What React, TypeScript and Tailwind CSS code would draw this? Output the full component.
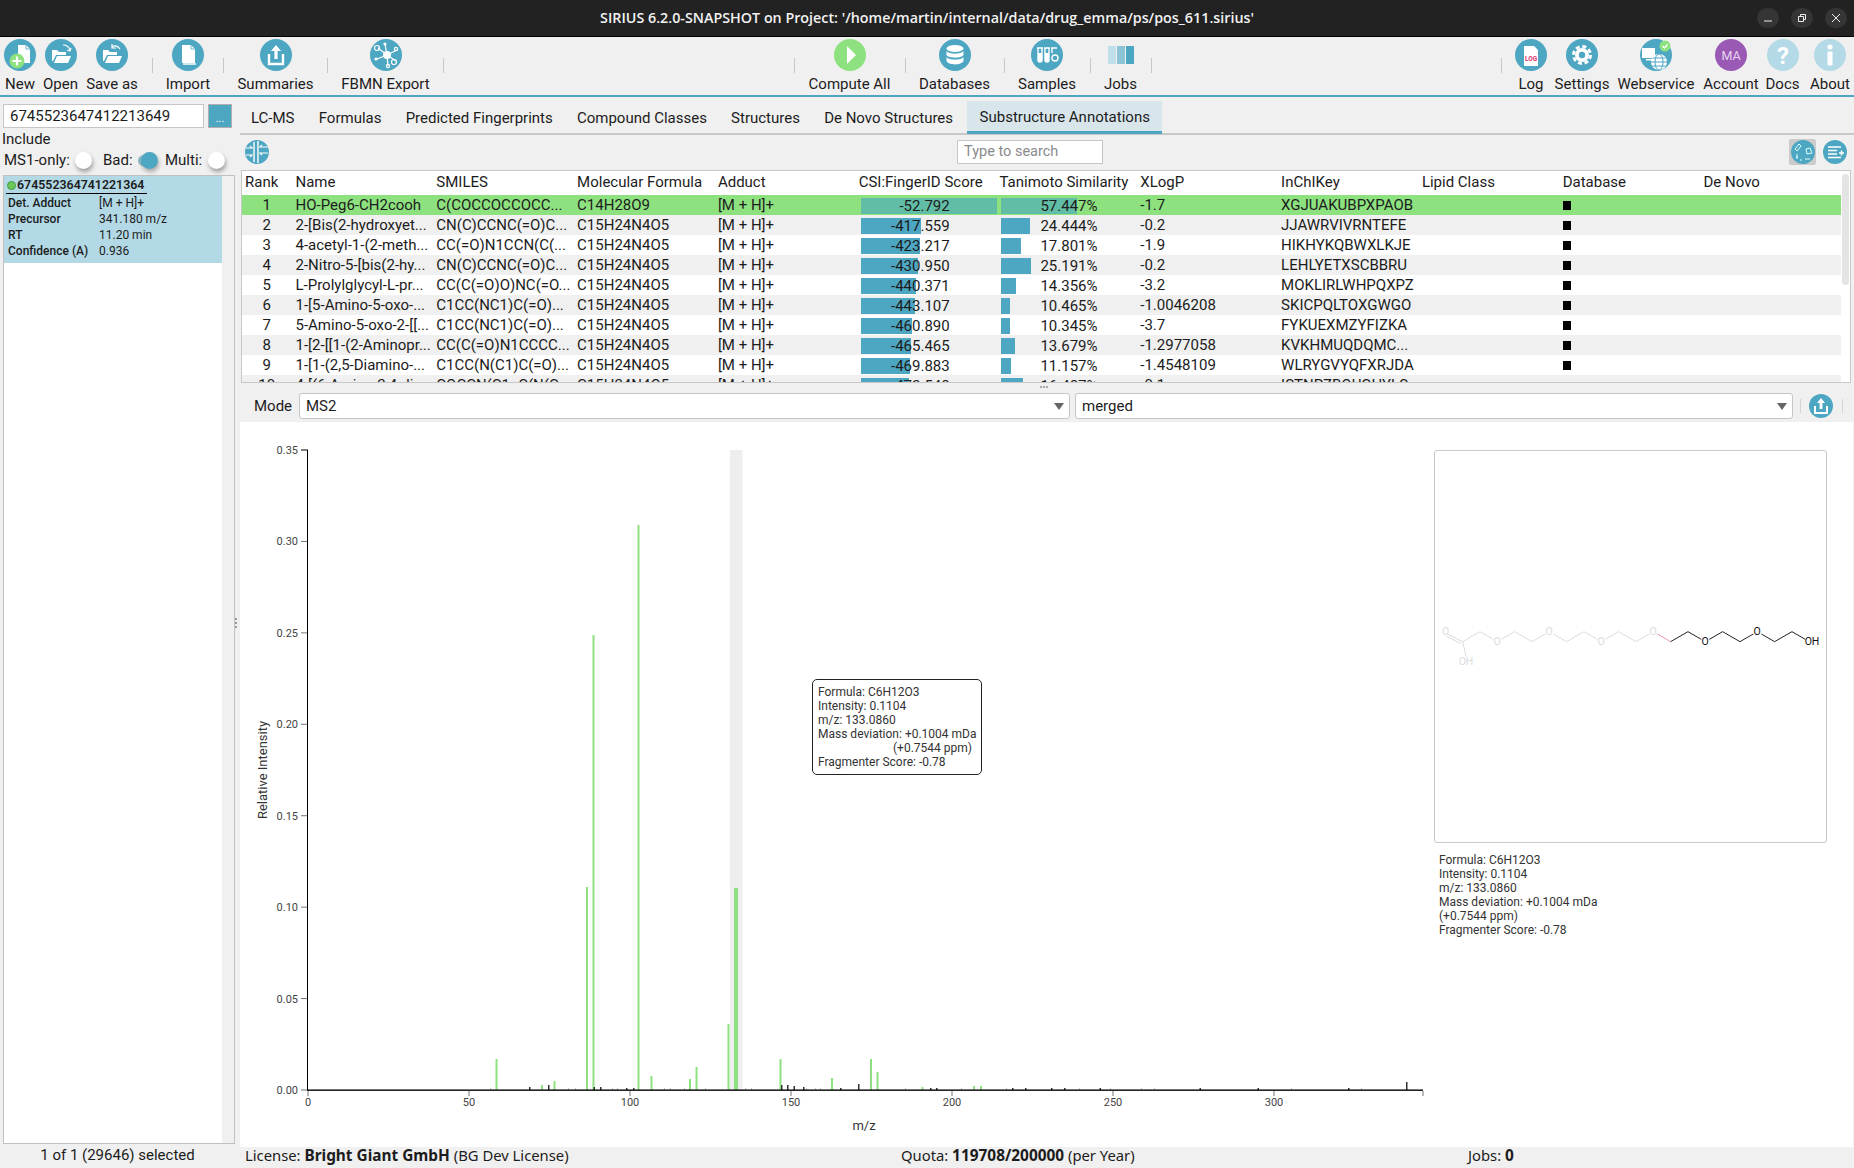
import React from 'react';

const TEAL = '#4da6c2';
const PALE = '#b3dae6';

const Disc = ({ fill = TEAL, children }: { fill?: string; children?: React.ReactNode }) => (
  <svg width="32" height="32" viewBox="0 0 32 32">
    <circle cx="16" cy="16" r="16" fill={fill} />
    {children}
  </svg>
);

const Folder = ({ flip = false }: { flip?: boolean }) => (
  <g>
    <path d="M7 22V11h5l2 2h7v3H11l-3 6z" fill="#fff" />
    <path d="M9 24l3-7h14l-3 7z" fill="#fff" />
    <path d={flip ? 'M16 8c3-2 6-1 8 2' : 'M18 6c3 0 6 2 7 5'} fill="none" stroke="#fff" strokeWidth="1.2" />
    <path d={flip ? 'M16 5v4h4' : 'M22 11l3 1 1-3'} fill="none" stroke="#fff" strokeWidth="1.2" />
  </g>
);

const icons: Record<string, React.ReactNode> = {
  new: (
    <Disc>
      <path d="M14 6h8l4 4v14H14z" fill="#fff" />
      <path d="M22 6v4h4" fill="none" stroke={TEAL} strokeWidth="0.8" />
      <circle cx="13" cy="22" r="7.5" fill="#8de27f" />
      <path d="M13 17.5v9M8.5 22h9" stroke="#fff" strokeWidth="2.2" />
    </Disc>
  ),
  open: <Disc><Folder /></Disc>,
  save: <Disc><Folder flip /></Disc>,
  import: (
    <Disc>
      <path d="M11 9h2v15h11v2H11z" fill="#cfe7ef" />
      <path d="M10 6h9l4 4v14H10z" fill="#fff" />
      <path d="M19 6v4h4" fill="none" stroke={TEAL} strokeWidth="0.8" />
    </Disc>
  ),
  summaries: (
    <Disc>
      <path d="M9 15v10h14V15" fill="none" stroke="#fff" strokeWidth="2.4" />
      <path d="M16 6l-5 6h3.4v8h3.2v-8H21z" fill="#fff" />
    </Disc>
  ),
  fbmn: (
    <Disc>
      <g stroke="#fff" strokeWidth="1.2" fill="none">
        <path d="M17 16L8 9M17 16l-2-11M17 16l10-5M17 16l9 6M17 16l1 11M17 16L7 20" />
        <circle cx="7" cy="9" r="2.5" />
        <circle cx="24" cy="23" r="2.5" />
        <circle cx="18" cy="27" r="1.6" />
        <circle cx="26" cy="10" r="1.6" />
      </g>
      <circle cx="17" cy="16" r="4" fill="#fff" />
      <circle cx="15" cy="5" r="1.6" fill="#fff" />
      <circle cx="6" cy="20" r="1.6" fill="#fff" />
    </Disc>
  ),
  compute: (
    <Disc fill="#8de27f">
      <path d="M13 7l9 9-9 9z" fill="#fff" />
    </Disc>
  ),
  databases: (
    <Disc>
      <ellipse cx="16" cy="9.5" rx="8.5" ry="3.5" fill="#fff" />
      <path d="M7.5 12c2 3.5 15 3.5 17 0v4c-2 3.5-15 3.5-17 0z" fill="#fff" />
      <path d="M7.5 18c2 3.5 15 3.5 17 0v4c-2 4.5-15 4.5-17 0z" fill="#fff" />
    </Disc>
  ),
  samples: (
    <Disc>
      <g fill="none" stroke="#fff" strokeWidth="1.4">
        <path d="M6 9h6M7 9v12a2 2 0 004 0V9" />
        <path d="M13 9h6M14 9v12a2 2 0 004 0V9" />
        <path d="M20 9h6M21 9v5" />
        <circle cx="24" cy="19" r="3" />
      </g>
      <path d="M7 14h4v7a2 2 0 01-4 0zM14 14h4v7a2 2 0 01-4 0z" fill="#fff" />
    </Disc>
  ),
  jobs: (
    <svg width="32" height="32" viewBox="0 0 32 32">
      <rect x="3" y="7" width="8" height="18" fill="#bfe0eb" />
      <rect x="12" y="7" width="8" height="18" fill="#8cc4d6" />
      <rect x="21" y="7" width="8" height="18" fill={TEAL} />
    </svg>
  ),
  log: (
    <Disc>
      <path d="M9 7h10l4 4v16H9z" fill="#fff" />
      <text x="16" y="22" textAnchor="middle" fontSize="6.5" fontWeight="700" fill="#e0306e" fontFamily="Roboto, sans-serif">LOG</text>
    </Disc>
  ),
  settings: (
    <Disc>
      <circle cx="16" cy="16" r="7" fill="#fff" />
      <circle cx="16" cy="16" r="8.5" fill="none" stroke="#fff" strokeWidth="3" strokeDasharray="4 2.68" />
      <circle cx="16" cy="16" r="3.2" fill={TEAL} />
    </Disc>
  ),
  web: (
    <Disc>
      <rect x="2" y="9" width="13" height="10" fill="#fff" />
      <rect x="6" y="20" width="6" height="1.5" fill="#fff" />
      <circle cx="19" cy="23" r="8" fill="#fff" />
      <g fill="none" stroke={TEAL} strokeWidth="1">
        <ellipse cx="19" cy="23" rx="4" ry="8" />
        <path d="M11 23h16M12.5 19h13M12.5 27h13" />
      </g>
      <circle cx="25" cy="7" r="5.5" fill="#8de27f" />
      <path d="M22.5 7l2 2 3-3.5" fill="none" stroke="#fff" strokeWidth="1.4" />
    </Disc>
  ),
  account: (
    <Disc fill="#9b59b6">
      <text x="16" y="20.5" textAnchor="middle" fontSize="12.5" fill="#e6d5ee" fontFamily="Roboto, sans-serif">MA</text>
    </Disc>
  ),
  docs: (
    <Disc fill={PALE}>
      <text x="16" y="25" textAnchor="middle" fontSize="24" fontWeight="700" fill="#fff" fontFamily="Roboto, sans-serif">?</text>
    </Disc>
  ),
  about: (
    <Disc fill={PALE}>
      <circle cx="16" cy="8" r="2.6" fill="#fff" />
      <rect x="13.5" y="12.5" width="5" height="14" rx="1" fill="#fff" />
    </Disc>
  ),
};

const ToolBtn = ({ icon, label, width }: { icon: string; label: string; width: string }) => (
  <div className={`${width} flex flex-col items-center shrink-0 pt-[2px]`}>
    {icons[icon]}
    <span className="mt-[4px] text-[15px] leading-[18px] whitespace-nowrap text-[#1c1c1c]">{label}</span>
  </div>
);

const Sep = () => <div className="w-px h-[15px] mt-[21px] bg-[#c8c8c8] shrink-0" />;

const Knob = () => <div className="w-[17px] h-[17px] rounded-full bg-white shadow-[1px_3px_4px_rgba(0,0,0,0.35)]" />;

const columns = ['Rank', 'Name', 'SMILES', 'Molecular Formula', 'Adduct', 'CSI:FingerID Score', 'Tanimoto Similarity', 'XLogP', 'InChIKey', 'Lipid Class', 'Database', 'De Novo'];

const rows = [
  ['HO-Peg6-CH2cooh', 'C(COCCOCCOCC...', 'C14H28O9', '-52.792', 136, '57.447%', 76, '-1.7', 'XGJUAKUBPXPAOB'],
  ['2-[Bis(2-hydroxyet...', 'CN(C)CCNC(=O)C...', 'C15H24N4O5', '-417.559', 60, '24.444%', 29, '-0.2', 'JJAWRVIVRNTEFE'],
  ['4-acetyl-1-(2-meth...', 'CC(=O)N1CCN(C(...', 'C15H24N4O5', '-423.217', 59, '17.801%', 20, '-1.9', 'HIKHYKQBWXLKJE'],
  ['2-Nitro-5-[bis(2-hy...', 'CN(C)CCNC(=O)C...', 'C15H24N4O5', '-430.950', 57, '25.191%', 30, '-0.2', 'LEHLYETXSCBBRU'],
  ['L-Prolylglycyl-L-pr...', 'CC(C(=O)O)NC(=O...', 'C15H24N4O5', '-440.371', 55, '14.356%', 15, '-3.2', 'MOKLIRLWHPQXPZ'],
  ['1-[5-Amino-5-oxo-...', 'C1CC(NC1)C(=O)...', 'C15H24N4O5', '-443.107', 54, '10.465%', 9, '-1.0046208', 'SKICPQLTOXGWGO'],
  ['5-Amino-5-oxo-2-[[...', 'C1CC(NC1)C(=O)...', 'C15H24N4O5', '-460.890', 51, '10.345%', 9, '-3.7', 'FYKUEXMZYFIZKA'],
  ['1-[2-[[1-(2-Aminopr...', 'CC(C(=O)N1CCCC...', 'C15H24N4O5', '-465.465', 50, '13.679%', 14, '-1.2977058', 'KVKHMUQDQMC...'],
  ['1-[1-(2,5-Diamino-...', 'C1CC(N(C1)C(=O)...', 'C15H24N4O5', '-469.883', 49, '11.157%', 10, '-1.4548109', 'WLRYGVYQFXRJDA'],
  ['4-[(6-Amino-2,4-di...', 'COCCN(C1=C(N(C...', 'C15H24N4O5', '-472.548', 48, '16.487%', 22, '-0.1', 'ISTNPZBOUGHYLS'],
] as const;

const green: [number, number, number?][] = [
  [496.5, 31], [542, 5], [554.5, 9], [587, 203], [593.5, 455], [638.5, 565], [651.5, 14], [690, 11], [696.5, 23],
  [728.5, 66], [736, 202, 4], [780.5, 31], [832, 12], [871, 31], [877.5, 18], [922.5, 3], [974, 4], [981, 4],
];
const black: [number, number][] = [
  [529, 3], [548, 5], [593.5, 3], [600, 3], [626, 2], [633, 2], [781, 5], [787, 5], [793.5, 4], [803, 3], [840, 2], [858, 6],
  [930, 2], [936, 2], [1012, 2], [1025, 2], [1051, 2], [1064, 2], [1099.5, 2], [1199.5, 2], [1257.5, 2], [1348, 2], [1406, 8],
];
const faint: [number, number][] = [
  [490, 2], [568, 2], [575, 2], [612, 2], [617, 2], [664, 2], [670, 2], [684, 2], [705, 2], [745, 2], [751, 2], [806, 2], [815, 2],
  [820, 2], [905, 2], [961, 2], [1006, 2], [1079, 2], [1110, 2], [1141, 2], [1154, 2], [1291, 2], [1361, 2],
];

const SpectrumChart = () => (
  <svg width="1190" height="725" viewBox="240 422 1190 725" className="shrink-0" fontFamily="Roboto, sans-serif">
    <rect x="730" y="450" width="12.5" height="640" fill="#eeeeee" />
    {faint.map(([x, h]) => <rect key={x} x={x} y={1090 - h} width="1" height={h} fill="#c4c4c4" />)}
    {green.map(([x, h, w]) => <rect key={x} x={x - (w ?? 2) / 2} y={1090 - h} width={w ?? 2} height={h} fill="#8de27f" />)}
    {black.map(([x, h]) => <rect key={x} x={x} y={1090 - h} width="1.5" height={h} fill="#333" />)}
    <path d="M307.5 450V1090M301 450h7M307 1090H1423" stroke="#000" strokeWidth="1" fill="none" />
    <path d="M307 1090.4H1423" stroke="#000" strokeWidth="0.8" fill="none" />
    {['0.35', '0.30', '0.25', '0.20', '0.15', '0.10', '0.05', '0.00'].map((t, i) => (
      <g key={t}>
        {i > 0 && <rect x="301" y={450 + i * 91.43 - 0.5} width="6" height="1" fill="#777" />}
        <text x="298" y={454 + i * 91.43} textAnchor="end" fontSize="11" fill="#444">{t}</text>
      </g>
    ))}
    {[0, 50, 100, 150, 200, 250, 300].map((t) => (
      <g key={t}>
        <rect x={307.5 + t * 3.22} y="1091" width="1" height="5" fill="#777" />
        <text x={308 + t * 3.22} y="1106" textAnchor="middle" fontSize="11" fill="#444">{t}</text>
      </g>
    ))}
    <rect x="1422.5" y="1091" width="1" height="5" fill="#777" />
    <text x="864" y="1130" textAnchor="middle" fontSize="13" fill="#333">m/z</text>
    <text transform="translate(267 770) rotate(-90)" textAnchor="middle" fontSize="13" fill="#333">Relative Intensity</text>
  </svg>
);

const light = '#dcdcdc';
const Molecule = () => (
  <svg width="391" height="391" viewBox="1435 451 391 391" fontFamily="Roboto, sans-serif" fontSize="10.5" className="block">
    <g transform="translate(1420 600) scale(0.3333)">
      <path d="M84 103L128 125M78 108L122 130M128 125L138 170M128 125L180 95L220 118M244 118L284 95L336 125L376 102M400 102L440 125L492 95L532 118M556 118L596 95L648 125L688 102" fill="none" stroke={light} strokeWidth="3" />
      <path d="M712 102L752 125" fill="none" stroke="#e89aa6" strokeWidth="3" />
      <path d="M752 125L804 95L844 118M868 118L908 95L960 125L1000 102M1024 102L1064 125L1116 95L1156 118" fill="none" stroke="#222" strokeWidth="3" />
    </g>
    {[[1445.5, 635], [1497, 645], [1549, 635], [1601, 645], [1653, 635]].map(([x, y]) => (
      <text key={x} x={x} y={y} textAnchor="middle" fill={light}>O</text>
    ))}
    <text x="1466" y="665" textAnchor="middle" fill={light}>OH</text>
    <text x="1705" y="645" textAnchor="middle" fill="#111">O</text>
    <text x="1757" y="635" textAnchor="middle" fill="#111">O</text>
    <text x="1812" y="645" textAnchor="middle" fill="#111">OH</text>
  </svg>
);

const Formula = ({ indent = false }: { indent?: boolean }) => (
  <>
    <div>Formula: C6H12O3</div>
    <div>Intensity: 0.1104</div>
    <div>m/z: 133.0860</div>
    <div>Mass deviation: +0.1004 mDa</div>
    <div className={indent ? 'pl-[75px]' : ''}>(+0.7544 ppm)</div>
    <div>Fragmenter Score: -0.78</div>
  </>
);

const Caret = () => (
  <svg width="10" height="7" viewBox="0 0 10 7" className="shrink-0"><path d="M0 0h10L5 7z" fill="#666" /></svg>
);

const Combo = ({ label, width }: { label: string; width: string }) => (
  <div className={`${width} h-[26px] shrink-0 flex items-center justify-between pl-[6px] pr-[5px] bg-white border border-[#c6c6c6] rounded-[3px] text-[15px]`}>
    {label}
    <Caret />
  </div>
);

export default function App() {
  return (
    <div className="w-[1854px] h-[1168px] flex flex-col overflow-hidden bg-[#f0f0f0] text-[#1c1c1c] font-[Roboto,sans-serif]">
      {/* window title */}
      <div className="h-[37px] shrink-0 relative flex items-center justify-center bg-[#222222] border-b border-black">
        <span className="text-[14.3px] font-semibold text-[#f2f2f2] font-['Open_Sans',sans-serif]">
          SIRIUS 6.2.0-SNAPSHOT on Project: '/home/martin/internal/data/drug_emma/ps/pos_611.sirius'
        </span>
        <div className="absolute right-[7px] top-[8px] flex gap-[12px]">
          {['min', 'max', 'close'].map((b) => (
            <div key={b} className="w-[22px] h-[20px] rounded-full bg-[#353535] flex items-center justify-center">
              <svg width="10" height="10" viewBox="0 0 10 10" fill="none" stroke="#eee" strokeWidth="1">
                {b === 'min' && <path d="M1 8h8" />}
                {b === 'max' && <path d="M1.5 3.5h5v5h-5zM3.5 3.5v-2h5v5h-2" />}
                {b === 'close' && <path d="M1 1l8 8M9 1l-8 8" />}
              </svg>
            </div>
          ))}
        </div>
      </div>

      {/* toolbar */}
      <div className="h-[60px] shrink-0 flex pr-[5px] border-b-2 border-[#4da6c2]">
        <ToolBtn icon="new" label="New" width="w-[40px]" />
        <ToolBtn icon="open" label="Open" width="w-[41px]" />
        <ToolBtn icon="save" label="Save as" width="w-[62px]" />
        <div className="w-[9px]" />
        <Sep />
        <ToolBtn icon="import" label="Import" width="w-[70px]" />
        <Sep />
        <ToolBtn icon="summaries" label="Summaries" width="w-[103px]" />
        <Sep />
        <ToolBtn icon="fbmn" label="FBMN Export" width="w-[115px]" />
        <Sep />
        <div className="flex-1" />
        <Sep />
        <ToolBtn icon="compute" label="Compute All" width="w-[110px]" />
        <Sep />
        <ToolBtn icon="databases" label="Databases" width="w-[98px]" />
        <Sep />
        <ToolBtn icon="samples" label="Samples" width="w-[85px]" />
        <Sep />
        <ToolBtn icon="jobs" label="Jobs" width="w-[60px]" />
        <Sep />
        <div className="flex-1" />
        <Sep />
        <ToolBtn icon="log" label="Log" width="w-[58px]" />
        <ToolBtn icon="settings" label="Settings" width="w-[44px]" />
        <ToolBtn icon="web" label="Webservice" width="w-[104px]" />
        <ToolBtn icon="account" label="Account" width="w-[46px]" />
        <ToolBtn icon="docs" label="Docs" width="w-[57px]" />
        <ToolBtn icon="about" label="About" width="w-[38px]" />
      </div>

      <div className="flex-1 flex min-h-0">
        {/* left column */}
        <div className="w-[232px] ml-[3px] shrink-0 flex flex-col pt-[7px]">
          <div className="flex h-[24px] shrink-0">
            <div className="w-[201px] flex items-center bg-white border border-[#c6c6c6] pl-[6px] text-[15px]">6745523647412213649</div>
            <div className="w-[24px] ml-[4px] bg-[#4da6c2] border border-[#b0b0b0] flex items-end justify-center text-[11px] leading-[16px] text-white">...</div>
          </div>
          <div className="ml-[-1px] mt-[2px] text-[15px] leading-[18px]">Include</div>
          <div className="flex items-center h-[24px] text-[15px]">
            <div className="w-[71px] ml-[1px]">MS1-only:</div>
            <Knob />
            <div className="w-[35px] ml-[11px]">Bad:</div>
            <div className="relative w-[20px] h-[17px]">
              <div className="absolute left-0 top-[3px] w-[18px] h-[11px] rounded-full bg-[#8fb9c9]" />
              <div className="absolute left-[3px] top-0 w-[17px] h-[17px] rounded-full bg-[#4da6c2] shadow-[1px_3px_4px_rgba(0,0,0,0.3)]" />
            </div>
            <div className="w-[43px] ml-[7px]">Multi:</div>
            <Knob />
          </div>
          <div className="flex-1 min-h-0 mt-[3px] bg-[#f0f0f0] border border-[#c0c0c0] flex">
            <div className="w-[218px] bg-white">
              <div className="h-[87px] bg-[#b2d9e5] pl-[2px] pt-[1px]">
                <div className="flex items-center w-[141px] h-[17px] border-b border-black text-[12.4px] font-semibold">
                  <div className="w-[9px] h-[9px] rounded-full bg-[#6fc75c] border border-[#3f9e40] mr-[1px] ml-[1px] shrink-0" />
                  674552364741221364
                </div>
                <div className="text-[12px] leading-[16px] mt-[1px] pl-[2px]">
                  {[['Det. Adduct', '[M + H]+'], ['Precursor', '341.180 m/z'], ['RT', '11.20 min'], ['Confidence (A)', '0.936']].map(([k, v]) => (
                    <div key={k} className="flex">
                      <div className="w-[91px] font-medium">{k}</div>
                      <div>{v}</div>
                    </div>
                  ))}
                </div>
              </div>
            </div>
          </div>
          <div className="h-[24px] shrink-0 flex items-center justify-center text-[15px] pr-[3px] pb-[1px]">1 of 1 (29646) selected</div>
        </div>

        {/* sash */}
        <div className="w-[5px] shrink-0 flex flex-col justify-center items-start gap-[2px] pb-[20px]">
          {[0, 1, 2].map((d) => <div key={d} className="w-[2px] h-[2px] bg-[#999]" />)}
        </div>

        {/* right column */}
        <div className="flex-1 min-w-0 flex flex-col relative">
          <div className="h-[38px] shrink-0 flex items-end border-b-2 border-[#c8c8c8] text-[15px]">
            {['LC-MS', 'Formulas', 'Predicted Fingerprints', 'Compound Classes', 'Structures', 'De Novo Structures'].map((t, i) => (
              <div key={t} className={`h-[32px] flex items-center pt-[2px] pr-[12px] ${i === 0 ? 'pl-[11px]' : 'pl-[12.2px]'}`}>{t}</div>
            ))}
            <div className="h-[33px] mb-[-1px] ml-[2px] flex items-center pt-[3px] px-[12.5px] bg-[#d8e6ec] border-b-[3px] border-[#4da6c2]">Substructure Annotations</div>
          </div>

          <div className="h-[35px] shrink-0 flex items-center pl-[5px] pr-[7px] pb-[2px]">
            <svg width="24" height="24" viewBox="0 0 24 24">
              <circle cx="12" cy="12" r="12" fill={TEAL} />
              <path d="M13 1v22M9 2v20" stroke="#fff" strokeWidth="1.4" />
              <path d="M1 8h6l-2-2M1 15h6l-2 2M23 7H15l2-2M23 13H15l2 2" fill="none" stroke="#fff" strokeWidth="1.2" />
            </svg>
            <div className="ml-[688px] w-[146px] h-[24px] bg-white border border-[#c6c6c6] flex items-center pl-[6px] text-[14.5px] text-[#8a8a8a]">Type to search</div>
            <div className="flex-1" />
            <div className="w-[27px] h-[26px] bg-[#cbcbcb] rounded-[2px] flex items-center justify-center">
              <svg width="24" height="24" viewBox="0 0 24 24">
                <circle cx="12" cy="12" r="12" fill={TEAL} />
                <path d="M4 9l4-5 2 2-4 5zM15 9l4-1 2 5-5 1z" fill="none" stroke="#dff" strokeWidth="1" />
                <path d="M5 17h2M9 20h2M14 19h5M6 14v5" stroke="#dff" strokeWidth="1" />
              </svg>
            </div>
            <div className="w-[24px] h-[24px] ml-[7px]">
              <svg width="24" height="24" viewBox="0 0 24 24">
                <circle cx="12" cy="12" r="12" fill={TEAL} />
                <path d="M5 7h13M5 10.5h9M5 14h9M5 17.5h13M16 13h5M18.5 10.5v5" stroke="#fff" strokeWidth="1.5" />
              </svg>
            </div>
          </div>

          {/* candidates table */}
          <div className="h-[213px] w-[1610px] shrink-0 ml-[1px] relative overflow-hidden border border-[#c8c8c8] bg-white">
            <div className="grid grid-cols-[49.5px_repeat(11,140.8px)] h-[24px] pb-[2px] items-center text-[15px]">
              {columns.map((c, i) => (
                <div key={c} className={`whitespace-nowrap ${i === 0 ? 'pl-[3px]' : 'pl-[4px]'}`}>{c}</div>
              ))}
            </div>
            {rows.map((r, idx) => (
              <div
                key={r[0]}
                className={`grid grid-cols-[49.5px_repeat(11,140.8px)] w-[1599px] h-[20px] items-center text-[15px] ${idx === 0 ? 'bg-[#8de27f]' : idx % 2 === 1 ? 'bg-[#f0f0f0]' : 'bg-white'}`}
              >
                <div className="text-center mt-[-1px]">{idx + 1}</div>
                <div className="pl-[4px] whitespace-nowrap mt-[-1px]">{r[0]}</div>
                <div className="pl-[4px] whitespace-nowrap mt-[-1px]">{r[1]}</div>
                <div className="pl-[4px] mt-[-1px]">{r[2]}</div>
                <div className="pl-[4px] mt-[-1px]">[M + H]+</div>
                <div className="relative h-[16px] ml-[6px] w-[136px] flex items-center">
                  <div className={`absolute left-0 top-0 h-full ${idx === 0 ? 'bg-[#62bda6]' : 'bg-[#4da6c2]'}`} style={{ width: r[4] }} />
                  <div className="relative w-[89px] text-right">{r[3]}</div>
                </div>
                <div className="relative h-[16px] ml-[6px] w-[130px] flex items-center">
                  <div className={`absolute left-0 top-0 h-full ${idx === 0 ? 'bg-[#62bda6]' : 'bg-[#4da6c2]'}`} style={{ width: r[6] }} />
                  <div className="relative w-[96px] text-right">{r[5]}</div>
                </div>
                <div className="pl-[4px] mt-[-1px]">{r[7]}</div>
                <div className="pl-[4px] whitespace-nowrap mt-[-1px]">{r[8]}</div>
                <div />
                <div className="pl-[2px]">{idx < 9 && <div className="ml-[2px] w-[8px] h-[9px] bg-black" />}</div>
                <div />
              </div>
            ))}
            {/* scrollbar */}
            <div className="absolute right-[1px] top-[3px] w-[7px] h-[111px] rounded-full bg-[#e4e4e4]" />
          </div>

          {/* mode row */}
          <div className="h-[39px] shrink-0 relative flex items-center pl-[14px] pt-[7px] text-[15px]">
            <div className="absolute left-[800px] top-[3px] flex gap-[1px]">
              {[0, 1, 2].map((d) => <div key={d} className="w-[2px] h-[2px] bg-[#aaa]" />)}
            </div>
            <div className="w-[45px]">Mode</div>
            <Combo label="MS2" width="w-[771px]" />
            <Combo label="merged" width="w-[718px] ml-[5px]" />
            <div className="w-px h-[14px] bg-[#d4d4d4] ml-[7px]" />
            <div className="ml-[8px]">
              <svg width="24" height="24" viewBox="0 0 24 24">
                <circle cx="12" cy="12" r="12" fill={TEAL} />
                <path d="M6 12v7h12v-7" fill="none" stroke="#fff" strokeWidth="2" />
                <path d="M12 4l-4 5h2.6v6h2.8V9H16z" fill="#fff" />
              </svg>
            </div>
            <div className="w-px h-[14px] bg-[#d4d4d4] ml-[9px]" />
          </div>

          {/* spectrum */}
          <div className="flex-1 min-h-0 flex relative bg-white mr-[1px]">
            <SpectrumChart />
            <div className="flex-1 pt-[28px] pl-[4px]">
              <div className="w-[393px] h-[393px] border border-[#c8c8c8] rounded-[3px]">
                <Molecule />
              </div>
              <div className="ml-[5px] mt-[10px] text-[12px] leading-[14px] text-[#333]">
                <Formula />
              </div>
            </div>
            {/* tooltip */}
            <div className="absolute left-[572px] top-[257px] w-[170px] h-[96px] bg-white border border-[#222] rounded-[5px] pl-[5px] pt-[5px] text-[12px] leading-[14px] text-[#333]">
              <Formula indent />
            </div>
          </div>

          {/* status */}
          <div className="h-[21px] shrink-0 flex items-center text-[14.8px] font-['Noto_Sans',sans-serif] pl-[5px] pb-[3px]">
            <div className="w-[656px]">License: <b className="text-[15.4px]">Bright Giant GmbH</b> (BG Dev License)</div>
            <div className="w-[567px]">Quota: <b className="text-[15.4px]">119708/200000</b> (per Year)</div>
            <div>Jobs: <b className="text-[15.4px]">0</b></div>
          </div>
        </div>
      </div>
    </div>
  );
}
